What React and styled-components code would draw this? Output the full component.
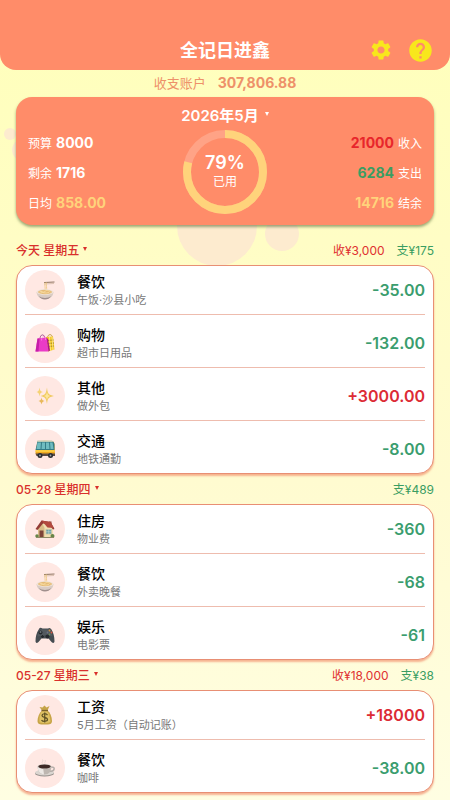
import React from 'react';
import styled, { createGlobalStyle } from 'styled-components';
import { MdSettings, MdHelp } from 'react-icons/md';

const GlobalStyle = createGlobalStyle`
  * {
    box-sizing: border-box;
  }
  body {
    margin: 0;
    min-height: 100vh;
    font-family: Inter, 'Noto Sans CJK SC', sans-serif;
    color: #111;
    background: #ffffbe;
  }
  button {
    font: inherit;
    color: inherit;
    background: none;
    border: 0;
    padding: 0;
    cursor: pointer;
  }
  h1, h2, h3, p, ul, dl, dd {
    margin: 0;
    padding: 0;
  }
`;

const NoodleIcon = () => (
  <svg viewBox="0 0 40 40">
    <path d="M18 4 L39 3 L39 5 L18 6 Z" fill="#8f7561" />
    <path d="M18 8 L38 7" stroke="#b99a80" strokeWidth="1" />
    <path d="M20 5 C19 11 21 14 20 22 M23 5 C22 11 24 15 23 22" stroke="#ecc77c" strokeWidth="1.600" fill="none" />
    <path d="M3 24 C4 34 11 38 20 38 C29 38 36 34 37 24 Z" fill="#d8cbc4" />
    <path d="M8 32 C13 37 27 37 32 32 C30 37 25 39 20 39 C14 39 10 36 8 32" fill="#a08f8d" />
    <ellipse cx="20" cy="24" rx="17" ry="6" fill="#efe3d8" />
    <ellipse cx="20" cy="24" rx="14" ry="4.500" fill="#e5bb78" />
    <path d="M9 24 C13 20 16 27 20 23 S27 21 31 24 M11 26 C16 23 19 28 28 25" stroke="#f9e0a6" strokeWidth="1.500" fill="none" />
  </svg>
);

const BagsIcon = () => (
  <svg viewBox="0 0 40 40">
    <path d="M25 10 C25 1 35 1 35 10" stroke="#b28b1c" strokeWidth="1.500" fill="none" />
    <path d="M22 8 L36 7 L39 33 L26 37 Z" fill="#f5c824" />
    <path d="M25 15 L37 14 M25 21 L38 20 M25 27 L38 26" stroke="#a98715" strokeWidth="2" />
    <path d="M29 8 L31 35 M34 8 L36 34" stroke="#fff0a0" strokeWidth="1.500" />
    <path d="M10 14 C9 1 20 0 20 13" stroke="#8b257e" strokeWidth="1.500" fill="none" />
    <path d="M5 11 L23 9 L27 37 L1 37 Z" fill="#ea3bc7" />
    <path d="M5 11 L9 11 L7 37 L1 37 Z" fill="#c51fa8" />
    <path d="M23 9 L26 12 L30 35 L27 37 Z" fill="#a9148f" />
    <path d="M13 15 C13 5 22 5 21 14" stroke="#ff8be4" strokeWidth="1.500" fill="none" />
  </svg>
);

const SparkleIcon = () => (
  <svg viewBox="0 0 40 40">
    <path d="M24 3 C25 15 27 18 38 20 C27 22 25 25 24 36 C22 25 21 22 11 20 C21 18 22 15 24 3 Z" fill="#f0ca5e" />
    <path d="M24 12 C25 17 26 19 31 20 C26 21 25 23 24 28 C23 23 22 21 18 20 C22 19 23 17 24 12 Z" fill="#fde59c" />
    <path d="M9 3 C10 9 11 11 16 12 C11 13 10 15 9 21 C8 15 7 13 3 12 C7 11 8 9 9 3 Z" fill="#f5d274" />
    <path d="M13 23 C14 28 15 29 19 30 C15 31 14 33 13 37 C12 33 11 31 7 30 C11 29 12 28 13 23 Z" fill="#e9b95a" />
  </svg>
);

const BusIcon = () => (
  <svg viewBox="0 0 40 40">
    <path d="M5 5 Q7 3 34 4 Q39 5 39 12 L40 31 Q39 34 34 34 L4 33 Q0 31 1 25 Z" fill="#efa920" />
    <path d="M5 4 L34 4 Q38 5 39 10 L39 22 L1 22 Z" fill="#347b86" />
    <path d="M5 7 L12 7 L11 20 L3 20 Z M14 7 L20 7 L20 20 L13 20 Z M22 7 L28 7 L29 20 L22 20 Z M30 7 L35 7 L37 20 L31 20 Z" fill="#6fbcc0" />
    <path d="M5 3 L34 3 L37 6 L4 6 Z" fill="#b9c9b4" />
    <path d="M1 24 H39" stroke="#ffd64a" strokeWidth="3" />
    <path d="M1 29 H40 V34 H3 Z" fill="#5c4b42" />
    <circle cx="10" cy="33" r="5" fill="#292c32" />
    <circle cx="31" cy="33" r="5" fill="#292c32" />
    <circle cx="10" cy="33" r="1.800" fill="#9da5aa" />
    <circle cx="31" cy="33" r="1.800" fill="#9da5aa" />
  </svg>
);

const HouseIcon = () => (
  <svg viewBox="0 0 40 40">
    <path d="M28 5 H33 V17 L28 13 Z" fill="#8b3f34" />
    <path d="M6 17 L14 7 L30 14 L36 19 V36 H6 Z" fill="#f0dfb1" />
    <path d="M6 17 L14 7 L19 18 V36 H6 Z" fill="#d9bd87" />
    <path d="M1 20 L13 3 L31 6 L39 20 L36 21 L27 10 L16 9 L5 22 Z" fill="#943c35" />
    <path d="M13 3 L31 6 L38 18 L25 17 Z" fill="#b34a3e" />
    <rect x="9" y="23" width="8" height="14" fill="#7e4438" />
    <rect x="22" y="21" width="11" height="9" fill="#6ba2a7" stroke="#c7c3a8" strokeWidth="1.500" />
    <path d="M27.500 21 V30 M22 25.500 H33" stroke="#d8e5d9" strokeWidth="1" />
    <circle cx="4" cy="34" r="3.500" fill="#668548" />
    <circle cx="35" cy="34" r="4" fill="#668548" />
    <path d="M2 37 H38" stroke="#8e8a65" strokeWidth="2" />
  </svg>
);

const GamepadIcon = () => (
  <svg viewBox="0 0 40 40">
    <path d="M8 8 Q10 4 15 7 H26 Q30 4 33 9 Q39 19 39 33 Q38 38 33 34 L27 27 H13 L7 34 Q2 38 1 33 Q1 18 8 8 Z" fill="#454c51" />
    <path d="M9 9 Q18 8 31 9 Q34 15 35 23 Q26 17 5 23 Q6 14 9 9" fill="#52595e" />
    <circle cx="11" cy="15" r="4" fill="#25292d" />
    <circle cx="11" cy="14" r="2" fill="#6b7378" />
    <circle cx="25" cy="23" r="4" fill="#25292d" />
    <path d="M15 20 V26 M12 23 H18" stroke="#24282b" strokeWidth="2.500" />
    <circle cx="29" cy="11" r="1.800" fill="#d1913c" />
    <circle cx="33" cy="15" r="1.800" fill="#db563f" />
    <circle cx="29" cy="19" r="1.800" fill="#6a8a5a" />
    <circle cx="25" cy="15" r="1.800" fill="#6a7086" />
  </svg>
);

const MoneyIcon = () => (
  <svg viewBox="0 0 40 40">
    <path d="M14 11 L9 4 L15 5 L19 1 L23 5 L29 2 L25 11 Z" fill="#c6a448" />
    <path d="M14 11 C8 16 5 25 5 32 C5 38 9 39 19 39 C30 39 34 38 34 32 C34 23 30 15 25 11 Z" fill="#c7a446" />
    <path d="M14 13 C10 17 8 25 9 34 C13 37 28 37 31 33 C30 24 28 16 24 13 Z" fill="#dfc265" />
    <path d="M13 11 H26" stroke="#79612b" strokeWidth="2.500" />
    <path d="M25 20 C22 16 14 17 14 21 C14 26 25 23 25 29 C25 33 16 34 13 30 M19.500 15 V35" fill="none" stroke="#5f5125" strokeWidth="2.500" />
  </svg>
);

const CoffeeIcon = () => (
  <svg viewBox="0 0 40 40">
    <path d="M15 11 C12 8 18 7 15 3 M20 11 C18 8 23 7 20 4" stroke="#e0d2cc" strokeWidth="1.500" fill="none" />
    <ellipse cx="19" cy="31" rx="19" ry="6" fill="#958f8b" />
    <ellipse cx="19" cy="29" rx="19" ry="6" fill="#dad5d0" />
    <path d="M31 18 C42 16 40 28 29 26" stroke="#b5aea9" strokeWidth="3" fill="none" />
    <path d="M5 17 C6 27 10 33 19 33 C28 33 32 27 33 17 Z" fill="#bdb6b0" />
    <path d="M5 17 C6 28 11 32 18 33 L16 18 Z" fill="#ece8e4" />
    <ellipse cx="19" cy="17" rx="14" ry="5" fill="#d9d3ce" />
    <ellipse cx="19" cy="17" rx="12.500" ry="4" fill="#3d2a26" />
  </svg>
);

const days = [
  {
    date: '今天 星期五',
    income: '3,000',
    spend: '175',
    items: [
      { icon: NoodleIcon, name: '餐饮', note: '午饭·沙县小吃', amount: '-35.00' },
      { icon: BagsIcon, name: '购物', note: '超市日用品', amount: '-132.00' },
      { icon: SparkleIcon, name: '其他', note: '做外包', amount: '+3000.00' },
      { icon: BusIcon, name: '交通', note: '地铁通勤', amount: '-8.00' },
    ],
  },
  {
    date: '05-28 星期四',
    spend: '489',
    items: [
      { icon: HouseIcon, name: '住房', note: '物业费', amount: '-360' },
      { icon: NoodleIcon, name: '餐饮', note: '外卖晚餐', amount: '-68' },
      { icon: GamepadIcon, name: '娱乐', note: '电影票', amount: '-61' },
    ],
  },
  {
    date: '05-27 星期三',
    income: '18,000',
    spend: '38',
    items: [
      { icon: MoneyIcon, name: '工资', note: '5月工资（自动记账）', amount: '+18000' },
      { icon: CoffeeIcon, name: '餐饮', note: '咖啡', amount: '-38.00' },
    ],
  },
];

const Caret = () => (
  <CaretSvg viewBox="0 0 4 4" aria-hidden="true">
    <path d="M0 0 H4 L2 4 Z" fill="currentColor" />
  </CaretSvg>
);

const ProgressRing = ({ percent }) => {
  const length = 2 * Math.PI * 38;
  return (
    <Ring>
      <svg viewBox="0 0 84 84" aria-hidden="true">
        <circle cx="42" cy="42" r="38" stroke="#ffa386" />
        <circle
          cx="42"
          cy="42"
          r="38"
          stroke="#ffd37b"
          strokeDasharray={`${(length * percent) / 100} ${length}`}
          transform="rotate(-90 42 42)"
        />
      </svg>
      <RingText>
        <strong>{percent}%</strong>
        <span>已用</span>
      </RingText>
    </Ring>
  );
};

const App = () => {
  return (
    <Page>
      <GlobalStyle />
      <Backdrop viewBox="0 0 450 800" aria-hidden="true">
        <circle cx="217" cy="226" r="40" />
        <circle cx="282" cy="234" r="17" />
        <circle cx="10" cy="134" r="6" />
        <circle cx="23" cy="150" r="11" />
      </Backdrop>
      <Header>
        <h1>全记日进鑫</h1>
        <Actions>
          <button aria-label="设置"><MdSettings size={24} /></button>
          <button aria-label="帮助"><MdHelp size={27} /></button>
        </Actions>
      </Header>
      <Account>
        <span>收支账户</span>
        <strong>307,806.88</strong>
      </Account>
      <Summary>
        <MonthButton>2026年5月<Caret /></MonthButton>
        <SummaryBody>
          <Stats>
            <Stat><dt>预算</dt><dd>8000</dd></Stat>
            <Stat><dt>剩余</dt><dd>1716</dd></Stat>
            <Stat $color="#ffd37b"><dt>日均</dt><dd>858.00</dd></Stat>
          </Stats>
          <ProgressRing percent={79} />
          <Stats>
            <Stat $right $color="#e8262b"><dt>收入</dt><dd>21000</dd></Stat>
            <Stat $right $color="#3a9d62"><dt>支出</dt><dd>6284</dd></Stat>
            <Stat $right $color="#ffd37b"><dt>结余</dt><dd>14716</dd></Stat>
          </Stats>
        </SummaryBody>
      </Summary>
      {days.map((day) => (
        <Day key={day.date}>
          <DayHeader>
            <DayButton>{day.date}<Caret /></DayButton>
            <Totals>
              {day.income && <Total $income>收¥{day.income}</Total>}
              <Total>支¥{day.spend}</Total>
            </Totals>
          </DayHeader>
          <List>
            {day.items.map(({ icon: Icon, name, note, amount }) => (
              <Item key={name + note}>
                <IconCircle><Icon /></IconCircle>
                <ItemText>
                  <h3>{name}</h3>
                  <p>{note}</p>
                </ItemText>
                <Amount $income={amount.startsWith('+')}>{amount}</Amount>
              </Item>
            ))}
          </List>
        </Day>
      ))}
    </Page>
  );
};

const Page = styled.main`
  position: relative;
  isolation: isolate;
  min-height: 100vh;
  padding-bottom: 7px;
  background: linear-gradient(#ffffba, #fffbd0 60%, #fffee2);
`;

const Backdrop = styled.svg`
  position: absolute;
  z-index: -1;
  top: 0;
  left: 0;
  width: 100%;
  fill: #fdebcf;
`;

const Header = styled.header`
  display: grid;
  grid-template-columns: 1fr auto 1fr;
  align-items: center;
  padding: 30px 16px 0;
  height: 70px;
  border-radius: 0 0 16px 16px;
  background: #ff8c69;

  h1 {
    grid-column: 2;
    padding-top: 2px;
    color: #fff;
    font-size: 18px;
    line-height: 24px;
    font-weight: 700;
  }
`;

const Actions = styled.div`
  display: flex;
  justify-content: flex-end;
  align-items: center;
  gap: 14px;
  color: #f8e71c;

  button,
  svg {
    display: block;
  }
`;

const Account = styled.div`
  display: flex;
  justify-content: center;
  align-items: center;
  gap: 12px;
  height: 27px;
  padding-bottom: 2px;
  font-size: 13px;
  color: #ee9169;

  strong {
    font-size: 14px;
    font-weight: 700;
  }
`;

const Summary = styled.section`
  display: flex;
  flex-direction: column;
  padding: 7px 12px 8px;
  margin: 0 16px 10px;
  border-radius: 16px;
  background: #ff8c69;
  box-shadow: 0 2px 3px rgba(90, 110, 60, 0.6);
  color: #fff;
`;

const CaretSvg = styled.svg`
  width: 4px;
  height: 4px;
`;

const MonthButton = styled.button`
  && {
    display: flex;
    align-items: center;
    align-self: center;
    gap: 6px;
    height: 20px;
    margin-bottom: 3px;
    font-size: 15px;
    font-weight: 600;
  }
`;

const SummaryBody = styled.div`
  display: grid;
  grid-template-columns: 1fr auto 1fr;
  align-items: center;
`;

const Stats = styled.dl`
  display: flex;
  flex-direction: column;
`;

const Stat = styled.div`
  display: flex;
  flex-direction: ${(p) => (p.$right ? 'row-reverse' : 'row')};
  align-items: center;
  gap: 4px;
  height: 30px;

  dt {
    font-size: 12px;
  }
  dd {
    color: ${(p) => p.$color || '#fff'};
    font-size: 14px;
    font-weight: 700;
  }
`;

const Ring = styled.div`
  display: grid;
  place-items: center;

  > * {
    grid-area: 1 / 1;
  }
  svg {
    width: 84px;
    height: 84px;
    fill: none;
    stroke-width: 8px;
  }
`;

const RingText = styled.div`
  display: flex;
  flex-direction: column;
  align-items: center;

  strong {
    font-size: 18px;
    line-height: 20px;
    font-weight: 600;
  }
  span {
    font-size: 12px;
    line-height: 18px;
  }
`;

const Day = styled.section`
  margin: 0 16px;
`;

const DayHeader = styled.div`
  display: flex;
  justify-content: space-between;
  align-items: center;
  height: 30px;
  padding-bottom: 2px;
`;

const DayButton = styled.button`
  && {
    display: flex;
    align-items: center;
    gap: 4px;
    font-size: 12px;
    font-weight: 500;
    color: #d9302c;
  }
`;

const Totals = styled.div`
  display: flex;
  gap: 12px;
  font-size: 12px;
`;

const Total = styled.span`
  color: ${(p) => (p.$income ? '#e03030' : '#3a9d62')};
`;

const List = styled.ul`
  list-style: none;
  && {
    padding: 0 8px;
  }
  border: 1px solid #e88f74;
  border-radius: 16px;
  background: #fff;
  box-shadow: 0 2px 2px rgba(240, 130, 95, 0.6);
`;

const Item = styled.li`
  display: flex;
  align-items: center;
  gap: 12px;
  padding: 8px 0 4px;

  &:first-child {
    padding-top: 4px;
  }
  & + & {
    border-top: 1px solid #eebcae;
  }
`;

const IconCircle = styled.span`
  display: grid;
  place-items: center;
  width: 40px;
  height: 40px;
  border-radius: 50%;
  background: #ffe8e3;

  svg {
    width: 20px;
    height: 20px;
  }
`;

const ItemText = styled.div`
  flex: 1;

  h3 {
    font-size: 14px;
    line-height: 20px;
    font-weight: 500;
    color: #000;
  }
  p {
    font-size: 11px;
    line-height: 16px;
    color: #777;
  }
`;

const Amount = styled.span`
  font-size: 16px;
  font-weight: 600;
  color: ${(p) => (p.$income ? '#dc2b35' : '#3a9d6e')};
`;

export default App;
